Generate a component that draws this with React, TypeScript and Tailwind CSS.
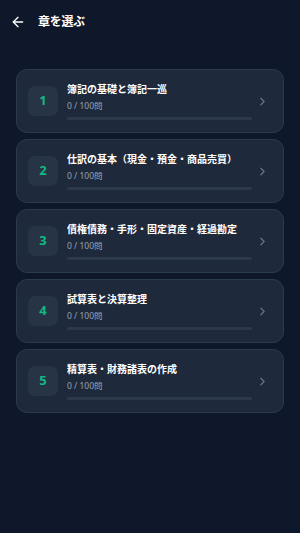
import { ArrowLeft, ChevronRight } from "lucide-react";

const chapters = [
  { no: 1, title: "簿記の基礎と簿記一巡", done: 0, total: 100 },
  { no: 2, title: "仕訳の基本（現金・預金・商品売買）", done: 0, total: 100 },
  { no: 3, title: "債権債務・手形・固定資産・経過勘定", done: 0, total: 100 },
  { no: 4, title: "試算表と決算整理", done: 0, total: 100 },
  { no: 5, title: "精算表・財務諸表の作成", done: 0, total: 100 },
];

export default function App() {
  return (
    <div
      className="min-h-screen w-full bg-[#0f172a] text-white"
      style={{ fontFamily: '"Noto Sans", "Noto Sans CJK JP", sans-serif' }}
    >
      {/* Header */}
      <div className="flex h-[44px] items-center gap-[12px] px-[10px]">
        <ArrowLeft className="h-[16px] w-[16px] text-white" strokeWidth={2} />
        <h1 className="text-[12px] font-bold tracking-tight">章を選ぶ</h1>
      </div>

      {/* Chapter list */}
      <div className="flex flex-col gap-[6px] px-[16px] pt-[25px]">
        {chapters.map((c) => (
          <button
            key={c.no}
            className="flex items-center rounded-[11px] border border-[#2c3a4f] bg-[#1e293b] py-[12px] pl-[11px] pr-[14px] text-left"
          >
            <div className="flex h-[30px] w-[30px] shrink-0 items-center justify-center rounded-[7px] bg-[#273446] text-[13px] font-bold text-[#10b981]">
              {c.no}
            </div>
            <div className="ml-[9px] min-w-0 flex-1">
              <div className="truncate text-[10px] font-bold leading-[15px] text-white">
                {c.title}
              </div>
              <div className="mt-[2px] text-[8.5px] leading-[13px] text-[#94a3b8]">
                {c.done} / {c.total}問
              </div>
              <div className="mt-[5px] h-[3px] w-full rounded-full bg-[#2c384b]">
                <div
                  className="h-full rounded-full bg-[#10b981]"
                  style={{ width: `${(c.done / c.total) * 100}%` }}
                />
              </div>
            </div>
            <ChevronRight className="ml-[4px] h-[13px] w-[13px] shrink-0 text-[#64748b]" strokeWidth={2.25} />
          </button>
        ))}
      </div>
    </div>
  );
}
